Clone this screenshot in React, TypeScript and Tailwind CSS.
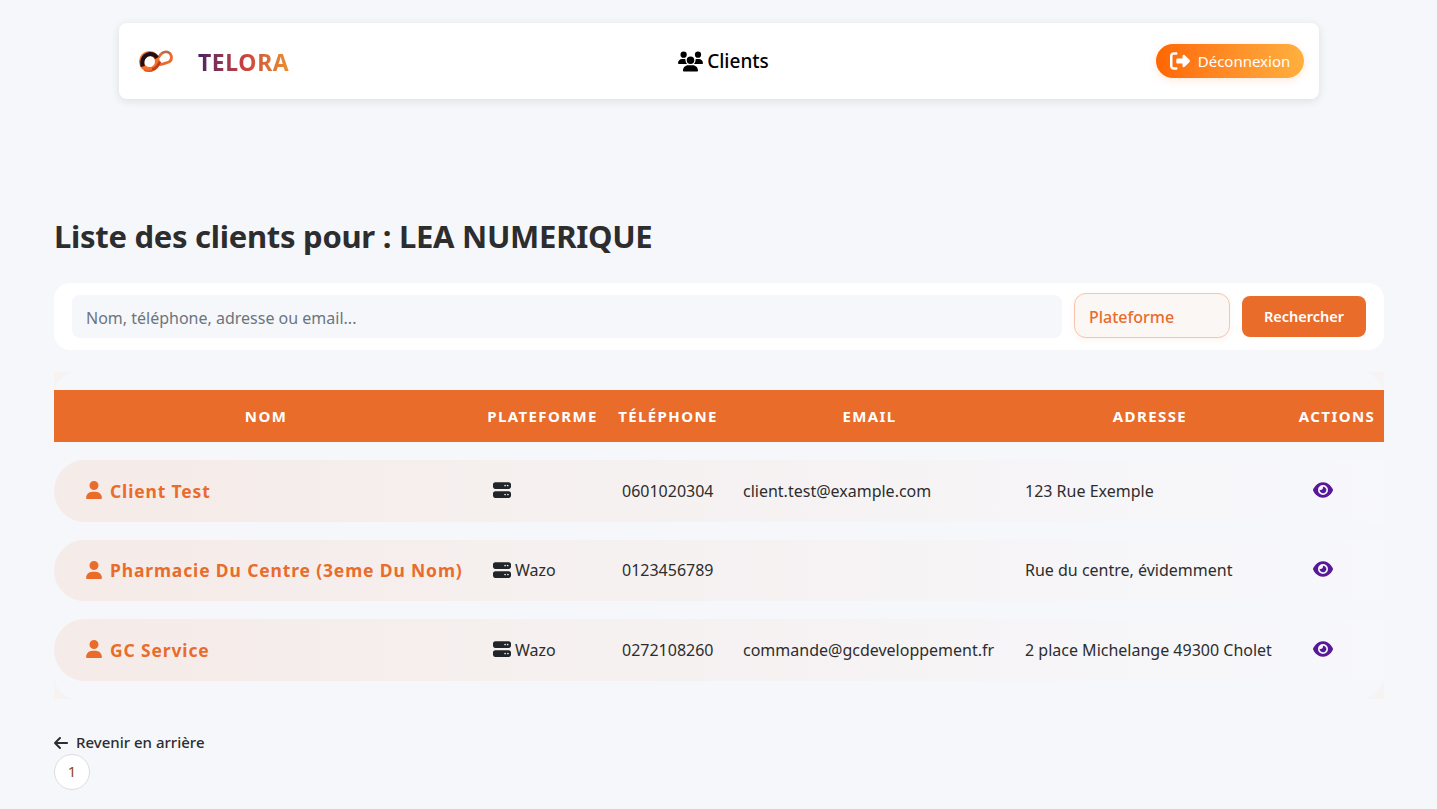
import React from 'react';
import { FaUsers, FaRightFromBracket, FaUser, FaServer, FaEye, FaArrowLeft } from 'react-icons/fa6';

const clients = [
  { name: 'Client Test', platform: '', phone: '0601020304', email: 'client.test@example.com', address: '123 Rue Exemple' },
  { name: 'Pharmacie Du Centre (3eme Du Nom)', platform: 'Wazo', phone: '0123456789', email: '', address: 'Rue du centre, évidemment' },
  { name: 'GC Service', platform: 'Wazo', phone: '0272108260', email: 'commande@gcdeveloppement.fr', address: '2 place Michelange 49300 Cholet' },
];

function Logo() {
  return (
    <svg width="36" height="24" viewBox="0 0 36 24" fill="none" className="-ml-[1px]">
      {/* right loop, thin at the top */}
      <path d="M19 15.500C22 16.500 26 14.500 31 13C34.500 11 34.500 4.500 29.500 3 25.500 2 22.500 5 20.500 8.500" stroke="#ec6a2c" strokeWidth="2.800" />
      <path d="M24 4C26.500 2.600 29.500 2.500 32 4" stroke="#9a6a66" strokeWidth="1.200" />
      <circle cx="28" cy="8" r="2.400" fill="#ffffff" />
      {/* left loop: orange outside, dark inside */}
      <circle cx="11.500" cy="12.500" r="8" stroke="#f0742a" strokeWidth="5" />
      <path d="M4.800 17.500C2.800 10.500 7 5 12.500 5 15.500 5 17.500 6.500 19 9" stroke="#1d0f1c" strokeWidth="4.200" />
      <path d="M14 20.500C17.500 20 20 17 22 12.500" stroke="#c43a20" strokeWidth="2.800" />
      <path d="M6 21C8.500 22.500 12 22.500 14.500 21.500" stroke="#e05a24" strokeWidth="1.500" />
    </svg>
  );
}

export default function App() {
  return (
    <div className="min-h-[809px] bg-[#f5f7fb] font-['Noto_Sans',sans-serif] text-[#2d2d2d]">
      {/* Top bar */}
      <div className="pt-[23px] flex justify-center">
        <header className="w-[1200px] h-[76px] ml-[1px] bg-white rounded-lg shadow-[0_2px_10px_rgba(0,0,0,0.1)] flex items-center justify-between pl-[20px] pr-[15px]">
          <div className="flex items-center w-[300px]">
            <Logo />
            <span className="ml-[24px] mt-[3px] text-[23px] font-bold tracking-[0.6px] bg-gradient-to-r from-[#4e1f5f] via-[#c8403c] to-[#e8902e] bg-clip-text text-transparent">TELORA</span>
          </div>
          <div className="flex items-center gap-[4px] text-black text-[19px] font-medium ml-[4px] mt-[1px]">
            <FaUsers className="text-[25px] -mt-[1px]" />
            <span>Clients</span>
          </div>
          <div className="w-[300px] flex justify-end">
            <button className="h-[34px] w-[148px] rounded-full bg-gradient-to-r from-[#ff6600] to-[#ffb03e] text-white text-[15px] flex items-center justify-center gap-[8px] shadow-[0_2px_8px_rgba(255,102,0,0.15)]">
              <FaRightFromBracket className="text-[20px]" />
              Déconnexion
            </button>
          </div>
        </header>
      </div>

      <main className="px-[54px] pr-[53px]">
        <h1 className="mt-[115px] text-[31px] leading-[44px] font-bold tracking-[-0.28px] text-[#2d2d2d]">Liste des clients pour : LEA NUMERIQUE</h1>

        {/* Search */}
        <div className="mt-[25px] h-[67px] bg-white rounded-2xl flex items-center pl-[18px] pr-[18px]">
          <input
            type="text"
            placeholder="Nom, téléphone, adresse ou email..."
            className="w-[990px] h-[43px] bg-[#f5f7fb] rounded-lg px-[14px] pt-[2px] text-base placeholder:text-[#6c757d] outline-none"
          />
          <div className="ml-[12px] -mt-[2px] w-[156px] h-[45px] rounded-xl border border-[#f8c4ac] bg-[#fbf7f5] flex items-center pl-[14px] pt-[2px] text-base font-medium text-[#e96c2b] shadow-[0_2px_6px_rgba(234,109,45,0.08)]">
            Plateforme
          </div>
          <button className="ml-[12px] w-[124px] h-[41px] rounded-lg bg-[#e96c2b] text-white text-[14.500px] font-semibold">Rechercher</button>
        </div>

        {/* Table */}
        <div className="mt-[22px] bg-[#f7f3f2]">
          <div className="rounded-3xl bg-[#f5f7fb]">
            <table className="w-full border-separate border-spacing-y-[18px] table-fixed">
              <colgroup>
                <col className="w-[424px]" />
                <col className="w-[129px]" />
                <col className="w-[122px]" />
                <col className="w-[281px]" />
                <col className="w-[280px]" />
                <col />
              </colgroup>
              <thead>
                <tr className="h-[52px] bg-[#e96c2b] text-white text-[15px] font-bold tracking-[1.400px]">
                  <th>NOM</th>
                  <th className="whitespace-nowrap">PLATEFORME</th>
                  <th className="whitespace-nowrap">TÉLÉPHONE</th>
                  <th>EMAIL</th>
                  <th>ADRESSE</th>
                  <th>ACTIONS</th>
                </tr>
              </thead>
              <tbody className="text-base text-[#2d2d2d]">
                {clients.map((c) => (
                  <tr key={c.name} className="h-[61.500px] bg-gradient-to-r from-[#f5ebe8] to-[#f7f8fc]">
                    <td className="rounded-l-[32px] pl-[32px]">
                      <div className="flex items-center gap-[7px] text-[#e96c2b] text-[17.500px] font-bold tracking-[0.85px]">
                        <FaUser className="text-[18px] -ml-[1px] shrink-0 -mt-[1px]" />
                        <span className="whitespace-nowrap">{c.name}</span>
                      </div>
                    </td>
                    <td className="pl-[15px]">
                      <div className="flex items-center gap-[4px]">
                        <FaServer className="text-[18px] text-[#212529] -mt-[1px]" />
                        <span>{c.platform}</span>
                      </div>
                    </td>
                    <td className="pl-[15px]">{c.phone}</td>
                    <td className="pl-[14px] whitespace-nowrap">{c.email}</td>
                    <td className="pl-[15px] whitespace-nowrap">{c.address}</td>
                    <td className="pl-[23px]">
                      <FaEye className="text-[20px] text-[#58189a] -mt-[2px]" />
                    </td>
                  </tr>
                ))}
              </tbody>
            </table>
          </div>
        </div>

        <div className="mt-[34px] flex items-center gap-[7px] text-[15px] font-medium text-[#2d2d2d] h-[20px]">
          <FaArrowLeft className="text-[16px] -ml-[1px]" />
          Revenir en arrière
        </div>
        <div className="mt-[1px] w-[36px] h-[36px] rounded-full bg-white border border-[#dddddd] flex items-center justify-center text-[15px] text-[#8a4a1f]">1</div>
      </main>
    </div>
  );
}
